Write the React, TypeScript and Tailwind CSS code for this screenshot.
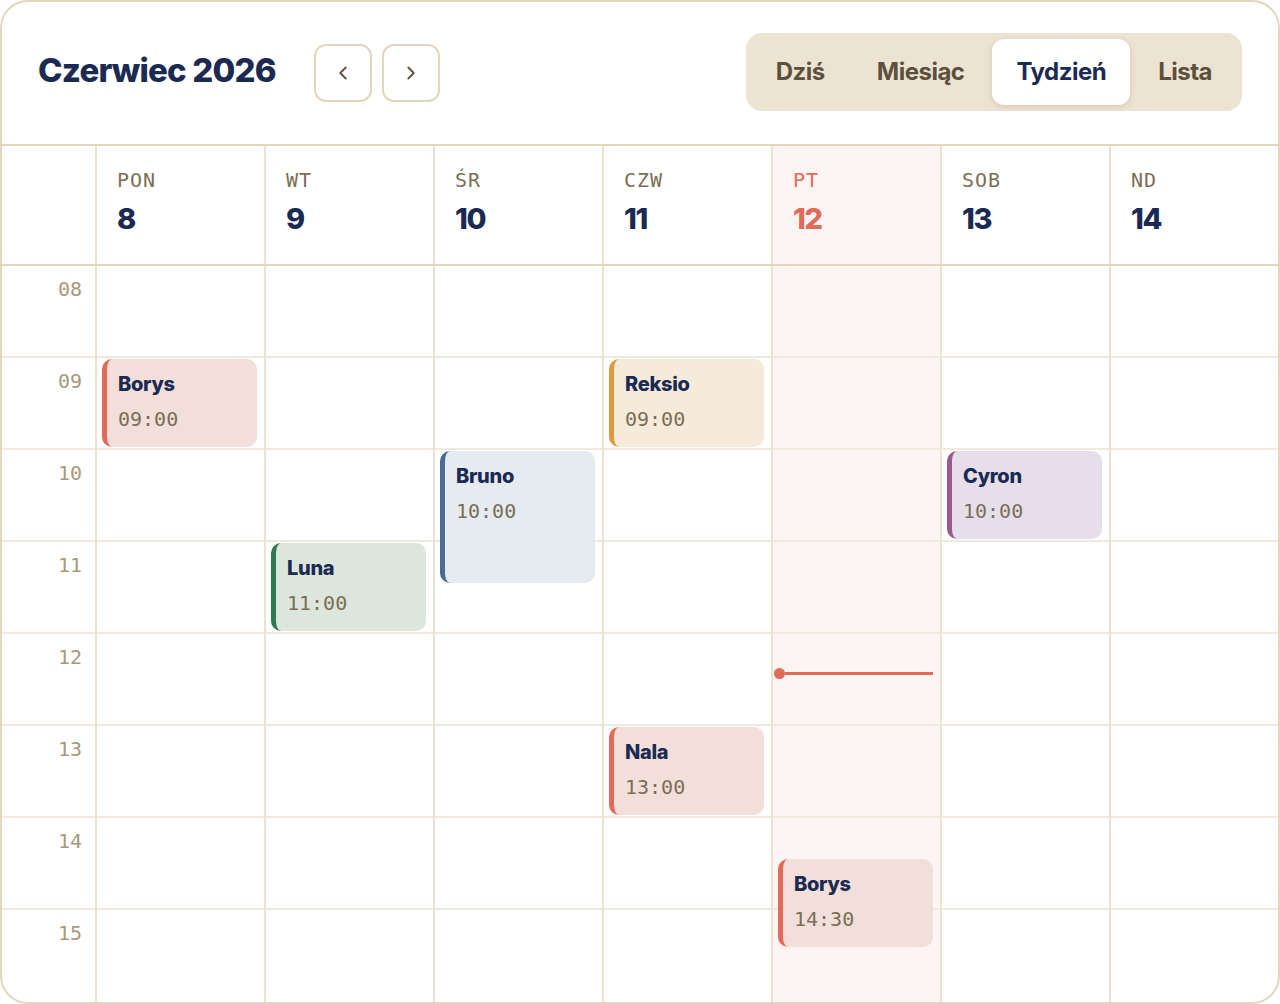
import { ChevronLeft, ChevronRight } from "lucide-react";

const sans = { fontFamily: "Inter, Lato, 'Noto Sans', sans-serif" };
const mono = { fontFamily: "'DejaVu Sans Mono', 'Liberation Mono', monospace" };

type Day = { label: string; date: number; today?: boolean };

const days: Day[] = [
  { label: "PON", date: 8 },
  { label: "WT", date: 9 },
  { label: "ŚR", date: 10 },
  { label: "CZW", date: 11 },
  { label: "PT", date: 12, today: true },
  { label: "SOB", date: 13 },
  { label: "ND", date: 14 },
];

const hours = ["08", "09", "10", "11", "12", "13", "14", "15"];

type Tone = "red" | "amber" | "blue" | "green" | "plum";

const tones: Record<Tone, string> = {
  red: "bg-[#f3dfd9] border-[#e06b58]",
  amber: "bg-[#f6ebda] border-[#dc9a3a]",
  blue: "bg-[#e6ebf2] border-[#4a6d93]",
  green: "bg-[#dde6dd] border-[#2d7a50]",
  plum: "bg-[#e6dfeb] border-[#9a5a8d]",
};

type CalEvent = { name: string; time: string; day: number; top: number; height: number; tone: Tone };

// top/height in px from the first hour row (92px per hour)
const events: CalEvent[] = [
  { name: "Borys", time: "09:00", day: 0, top: 93, height: 88, tone: "red" },
  { name: "Reksio", time: "09:00", day: 3, top: 93, height: 88, tone: "amber" },
  { name: "Bruno", time: "10:00", day: 2, top: 185, height: 132, tone: "blue" },
  { name: "Cyron", time: "10:00", day: 5, top: 185, height: 88, tone: "plum" },
  { name: "Luna", time: "11:00", day: 1, top: 277, height: 88, tone: "green" },
  { name: "Nala", time: "13:00", day: 3, top: 461, height: 88, tone: "red" },
  { name: "Borys", time: "14:30", day: 4, top: 593, height: 88, tone: "red" },
];

function EventCard({ ev }: { ev: CalEvent }) {
  return (
    <div
      className={`absolute left-[5px] right-[7px] rounded-[10px] border-l-[5px] pl-[11px] pt-[13px] ${tones[ev.tone]}`}
      style={{ top: ev.top, height: ev.height }}
    >
      <div className="text-[20px] leading-6 font-extrabold tracking-[-0.3px] text-[#1b2a52]" style={sans}>
        {ev.name}
      </div>
      <div className="mt-[11px] text-[20px] leading-6 text-[#7b6e55]" style={mono}>
        {ev.time}
      </div>
    </div>
  );
}

export default function App() {
  const tabs = ["Dziś", "Miesiąc", "Tydzień", "Lista"];

  return (
    <div className="w-[1280px] h-[1004px] bg-white">
      <div className="h-full overflow-hidden rounded-[28px] border-2 border-[#e2d6bc] bg-white flex flex-col">
        {/* toolbar */}
        <div className="h-[144px] shrink-0 flex items-center justify-between pl-[36px] pr-[36px] border-b-2 border-[#e2d6bc]">
          <div className="flex items-center">
            <h1 className="text-[33px] font-extrabold text-[#1b2a52] tracking-[-0.8px] mt-[-5px]" style={sans}>
              Czerwiec 2026
            </h1>
            <div className="ml-[38px] flex gap-[10px]">
              <button className="w-[58px] h-[58px] rounded-[12px] border-2 border-[#e2d6bc] flex items-center justify-center text-[#5c4f3c]">
                <ChevronLeft size={22} strokeWidth={2} />
              </button>
              <button className="w-[58px] h-[58px] rounded-[12px] border-2 border-[#e2d6bc] flex items-center justify-center text-[#5c4f3c]">
                <ChevronRight size={22} strokeWidth={2} />
              </button>
            </div>
          </div>
          <div className="flex gap-1 rounded-[16px] bg-[#ece3d2] p-1.5 mt-[-2px]">
            {tabs.map((t) => (
              <div
                key={t}
                className={`h-[66px] px-6 flex items-center rounded-[12px] text-[24px] font-bold tracking-[-0.5px] ${
                  t === "Tydzień" ? "bg-white text-[#1b2a52] shadow-[0_2px_6px_rgba(90,70,40,0.15)]" : "text-[#5c4f3c]"
                }`}
                style={sans}
              >
                {t}
              </div>
            ))}
          </div>
        </div>

        {/* day headers */}
        <div className="h-[120px] shrink-0 grid grid-cols-[93px_repeat(7,1fr)] border-b-2 border-[#e2d6bc]">
          <div />
          {days.map((d) => (
            <div
              key={d.label}
              className={`border-l-2 border-[#ebe2d2] pl-5 pt-[20px] ${d.today ? "bg-[#fcf4f2]" : ""}`}
            >
              <div
                className={`text-[20px] leading-7 tracking-[1px] ${d.today ? "text-[#e06b58]" : "text-[#7b6e55]"}`}
                style={mono}
              >
                {d.label}
              </div>
              <div
                className={`mt-[9px] text-[29px] leading-8 font-extrabold tracking-[-1.2px] ${d.today ? "text-[#e06b58]" : "text-[#1b2a52]"}`}
                style={sans}
              >
                {d.date}
              </div>
            </div>
          ))}
        </div>

        {/* hour grid */}
        <div className="flex-1 grid grid-cols-[93px_repeat(7,1fr)]">
          <div>
            {hours.map((h, i) => (
              <div
                key={h}
                className={`h-[92px] pr-[13px] pt-[9px] text-right text-[20px] leading-7 text-[#a8997c] ${
                  i < hours.length - 1 ? "border-b-2 border-[#f0e9dd]" : ""
                }`}
                style={mono}
              >
                {h}
              </div>
            ))}
          </div>
          {days.map((d, di) => (
            <div key={d.label} className={`relative border-l-2 border-[#ebe2d2] ${d.today ? "bg-[#fcf5f3]" : ""}`}>
              {hours.map((h, i) => (
                <div key={h} className={`h-[92px] ${i < hours.length - 1 ? "border-b-2 border-[#f0e9dd]" : ""}`} />
              ))}
              {events
                .filter((ev) => ev.day === di)
                .map((ev) => (
                  <EventCard key={ev.name + ev.time} ev={ev} />
                ))}
              {d.today && (
                <div className="absolute left-[1px] right-[7px] top-[402px] flex items-center">
                  <div className="w-[11px] h-[11px] rounded-full bg-[#e06b58] shrink-0" />
                  <div className="flex-1 h-[3px] bg-[#e06b58]" />
                </div>
              )}
            </div>
          ))}
        </div>
      </div>
    </div>
  );
}
